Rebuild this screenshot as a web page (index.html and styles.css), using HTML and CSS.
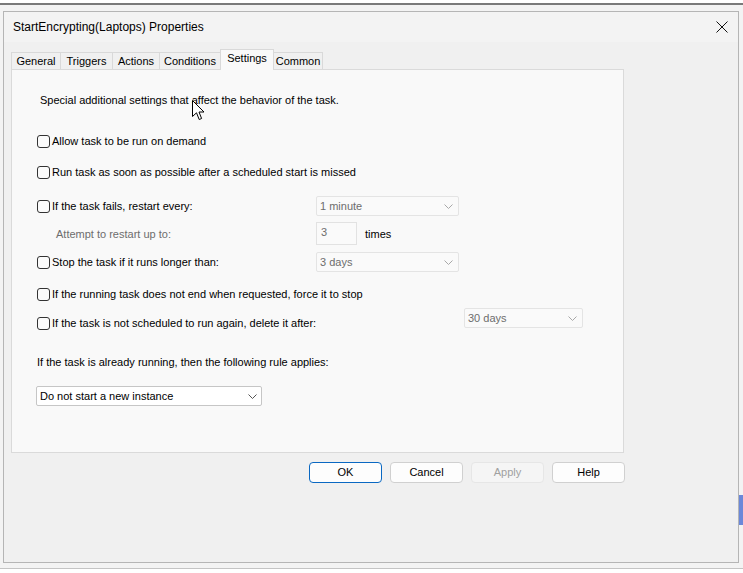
FILE: index.html
```html
<!DOCTYPE html>
<html>
<head>
<meta charset="utf-8">
<link rel="stylesheet" href="styles.css">
</head>
<body>
<div class="backwin"></div>
<div class="backsel"></div>
<div class="dialog">
  <div class="titlebar">
    <span class="title">StartEncrypting(Laptops) Properties</span>
    <svg class="close" width="12" height="12" viewBox="0 0 12 12"><path d="M0.5 0.5 L11.5 11.5 M11.5 0.5 L0.5 11.5" stroke="#111" stroke-width="1" fill="none"/></svg>
  </div>
  <div class="tabs">
    <div class="tab t-general">General</div>
    <div class="tab t-triggers">Triggers</div>
    <div class="tab t-actions">Actions</div>
    <div class="tab t-conditions">Conditions</div>
    <div class="tab t-settings active">Settings</div>
    <div class="tab t-common">Common</div>
  </div>
  <div class="panel">
    <p class="desc">Special additional settings that affect the behavior of the task.</p>
    <div class="row r1"><label class="cb"><span class="box"></span>Allow task to be run on demand</label></div>
    <div class="row r2"><label class="cb cb-wide"><span class="box"></span>Run task as soon as possible after a scheduled start is missed</label></div>
    <div class="row r3">
      <label class="cb"><span class="box"></span>If the task fails, restart every:</label>
      <div class="combo">1 minute<svg width="9" height="5" viewBox="0 0 9 5"><path d="M0.5 0.5 L4.5 4.5 L8.5 0.5" stroke="#a8a8a8" fill="none"/></svg></div>
    </div>
    <div class="row attempt">
      <span class="attempt-label">Attempt to restart up to:</span>
      <div class="num">3</div>
      <span class="times">times</span>
    </div>
    <div class="row r4">
      <label class="cb"><span class="box"></span>Stop the task if it runs longer than:</label>
      <div class="combo">3 days<svg width="9" height="5" viewBox="0 0 9 5"><path d="M0.5 0.5 L4.5 4.5 L8.5 0.5" stroke="#a8a8a8" fill="none"/></svg></div>
    </div>
    <div class="row r5"><label class="cb cb-wide"><span class="box"></span>If the running task does not end when requested, force it to stop</label></div>
    <div class="row r6">
      <label class="cb cb-long"><span class="box"></span>If the task is not scheduled to run again, delete it after:</label>
      <div class="combo combo-small">30 days<svg width="9" height="5" viewBox="0 0 9 5"><path d="M0.5 0.5 L4.5 4.5 L8.5 0.5" stroke="#a8a8a8" fill="none"/></svg></div>
    </div>
    <p class="rule">If the task is already running, then the following rule applies:</p>
    <div class="select">Do not start a new instance<svg width="9" height="5" viewBox="0 0 9 5"><path d="M0.5 0.5 L4.5 4.5 L8.5 0.5" stroke="#555" fill="none"/></svg></div>
  </div>
  <div class="buttons">
    <div class="btn btn-default">OK</div>
    <div class="btn">Cancel</div>
    <div class="btn btn-disabled">Apply</div>
    <div class="btn">Help</div>
  </div>
</div>
<svg class="cursor" width="13" height="21" viewBox="0 0 13 21"><path d="M0.5 0.5 V16.5 L4.5 12.8 L7.2 19.5 L9.6 18.5 L7 12 H12 Z" fill="#fff" stroke="#000" stroke-width="1" stroke-linejoin="miter"/></svg>
</body>
</html>
```
FILE: styles.css
```css
* { box-sizing: border-box; }
html, body { margin: 0; padding: 0; }
body {
  width: 743px;
  height: 573px;
  overflow: hidden;
  position: relative;
  background: #ffffff;
  font-family: "Liberation Sans", Arial, sans-serif;
  font-size: 11px;
  color: #000;
}
.backwin {
  position: absolute;
  left: 0;
  top: 3px;
  width: 743px;
  height: 566px;
  background: #f3f3f3;
  border-top: 2px solid #7a7a7a;
  border-bottom: 1px solid #c4c4c4;
}
.backsel {
  position: absolute;
  left: 739px;
  top: 495px;
  width: 4px;
  height: 30px;
  background: #6b88d9;
}
.dialog {
  position: absolute;
  left: 3px;
  top: 11px;
  width: 736px;
  height: 552px;
  background: #f0f0f0;
  border: 1px solid #b5b5b5;
  display: flex;
  flex-direction: column;
}
.titlebar {
  height: 30px;
  background: #f3f3f3;
  display: flex;
  align-items: center;
  padding: 0 10px 0 9px;
  font-size: 12px;
}
.close { margin-left: auto; }
.tabs {
  height: 27px;
  display: flex;
  align-items: flex-end;
  padding-left: 7px;
}
.tab {
  height: 17px;
  border: 1px solid #d9d9d9;
  border-bottom: none;
  margin-right: -1px;
  text-align: center;
  line-height: 16px;
  background: #f0f0f0;
}
.tab.active {
  height: 21px;
  margin-bottom: -1px;
  line-height: 17px;
  background: #f9f9f9;
  position: relative;
  z-index: 1;
}
.t-general { width: 50px; }
.t-triggers { width: 53px; }
.t-actions { width: 48px; }
.t-conditions { width: 62px; }
.t-settings { width: 54px; }
.t-common { width: 50px; }
.panel {
  margin-left: 7px;
  width: 613px;
  height: 384px;
  background: #f9f9f9;
  border: 1px solid #dadada;
  padding: 20px 0 0 25px;
}
.desc {
  margin: 0 0 0 3px;
  height: 20px;
  line-height: 20px;
}
.row {
  display: flex;
  align-items: center;
  height: 20px;
}
.r1 { margin-top: 21px; }
.r2 { margin-top: 11px; }
.r3 { margin-top: 14px; }
.attempt { margin-top: 6px; height: 23px; }
.r4 { margin-top: 7px; }
.r5 { margin-top: 12px; }
.r6 { margin-top: 4px; height: 25px; align-items: flex-start; }
.r6 .cb { margin-top: 5px; height: 20px; }
.cb {
  display: flex;
  align-items: center;
  width: 279px;
  flex: none;
}
.cb-wide { width: 450px; }
.cb-long { width: 427px; }
.box {
  width: 13px;
  height: 13px;
  border: 1px solid #333;
  border-radius: 3px;
  background: #fbfbfb;
  margin-right: 2px;
  flex: none;
}
.combo {
  width: 143px;
  height: 20px;
  border: 1px solid #e4e4e4;
  border-radius: 2px;
  background: #fafafa;
  color: #6d6d6d;
  display: flex;
  align-items: center;
  justify-content: space-between;
  padding: 0 5px 0 3px;
}
.combo-small { width: 119px; }
.attempt-label {
  width: 279px;
  padding-left: 19px;
  color: #6d6d6d;
  flex: none;
}
.num {
  width: 41px;
  height: 23px;
  border: 1px solid #e2e2e2;
  background: #fafafa;
  color: #6d6d6d;
  padding: 1px 0 0 4px;
  line-height: 16px;
  align-self: flex-start;
}
.times { margin-left: 8px; }
.rule {
  margin: 19px 0 0 0;
  height: 20px;
  line-height: 20px;
}
.select {
  margin: 14px 0 0 -1px;
  width: 226px;
  height: 20px;
  border: 1px solid #c6c6c6;
  border-radius: 2px;
  background: #fff;
  display: flex;
  align-items: center;
  justify-content: space-between;
  padding: 0 4px 0 3px;
}
.buttons {
  display: flex;
  gap: 8px;
  margin: 9px 0 0 305px;
}
.btn {
  width: 73px;
  height: 21px;
  border: 1px solid #d0d0d0;
  border-radius: 4px;
  background: #fdfdfd;
  text-align: center;
  line-height: 19px;
}
.btn-default { border-color: #0a68c2; }
.btn-disabled { background: #f5f5f5; border-color: #e6e6e6; color: #a0a0a0; }
.cursor {
  position: absolute;
  left: 192px;
  top: 100px;
}
```
